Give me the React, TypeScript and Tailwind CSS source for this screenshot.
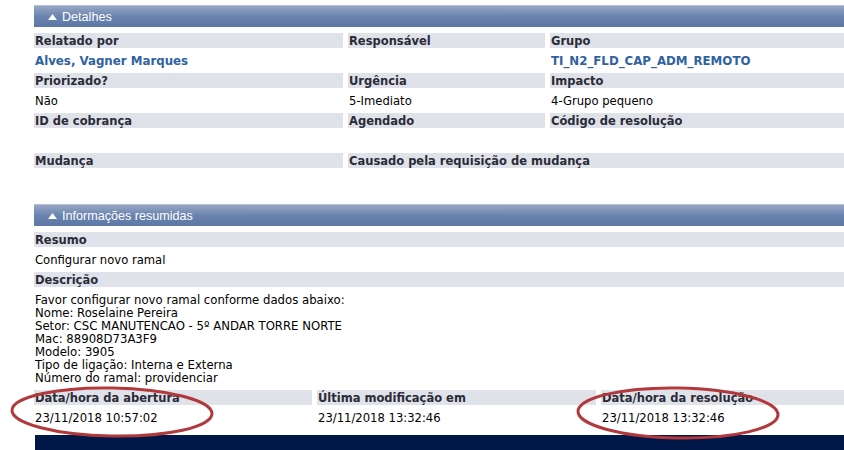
import React from 'react';

const font = { fontFamily: '"DejaVu Sans", Verdana, sans-serif' };

function SectionHeader({ title }: { title: string }) {
  return (
    <div className="h-[22px] flex items-center bg-linear-to-b from-[#98a7c6] via-[#6a83ae] to-[#5c78a5] border-t border-[#b7c1d6] pl-[14px] pt-px text-white text-[12.6px]" style={{ fontFamily: '"Liberation Sans", Arial, sans-serif' }}>
      <svg width="9" height="6" viewBox="0 0 9 6" className="mr-[5px]">
        <path d="M0 6 L4.5 0 L9 6 Z" fill="#fff" />
      </svg>
      {title}
    </div>
  );
}

function Label({ children, className = '' }: { children?: React.ReactNode; className?: string }) {
  return (
    <div className={`h-[15px] leading-[17px] bg-[#dfe2e9] pl-[1px] font-bold text-[11.5px] text-[#2b2b38] whitespace-nowrap overflow-hidden ${className}`}>
      {children}
    </div>
  );
}

function Value({ children, link = false, className = '' }: { children?: React.ReactNode; link?: boolean; className?: string }) {
  return (
    <div className={`h-[25px] leading-[27px] pl-[1px] whitespace-nowrap ${link ? 'text-[#2f62a1] font-bold text-[11.8px]' : 'text-black text-[11.6px]'} ${className}`}>
      {children}
    </div>
  );
}

const descricao = [
  'Favor configurar novo ramal conforme dados abaixo:',
  'Nome: Roselaine Pereira',
  'Setor: CSC MANUTENCAO - 5º ANDAR TORRE NORTE',
  'Mac: 88908D73A3F9',
  'Modelo: 3905',
  'Tipo de ligação: Interna e Externa',
  'Número do ramal: providenciar',
];

export default function App() {
  return (
    <div className="relative w-[844px] h-[450px] overflow-hidden bg-white" style={font}>
      <div className="pl-[34px] pt-[5px]">
        <SectionHeader title="Detalhes" />
        <div className="grid grid-cols-[309px_197px_1fr] gap-x-[5px] mt-[6px]">
          <Label>Relatado por</Label>
          <Label>Responsável</Label>
          <Label>Grupo</Label>
          <Value link>Alves, Vagner Marques</Value>
          <Value />
          <Value link>TI_N2_FLD_CAP_ADM_REMOTO</Value>

          <Label>Priorizado?</Label>
          <Label>Urgência</Label>
          <Label>Impacto</Label>
          <Value>Não</Value>
          <Value>5-Imediato</Value>
          <Value>4-Grupo pequeno</Value>

          <Label>ID de cobrança</Label>
          <Label>Agendado</Label>
          <Label>Código de resolução</Label>
          <Value />
          <Value />
          <Value />

          <Label>Mudança</Label>
          <Label className="col-span-2">Causado pela requisição de mudança</Label>
          <Value />
          <Value className="col-span-2" />
        </div>

        <div className="mt-[11px]">
          <SectionHeader title="Informações resumidas" />
        </div>
        <div className="mt-[6px]">
          <Label>Resumo</Label>
          <Value>Configurar novo ramal</Value>
          <Label>Descrição</Label>
          <div className="pt-[7px] pb-[5px] pl-[1px] text-[11.7px] leading-[13px] text-black">
            {descricao.map((l) => (
              <div key={l}>{l}</div>
            ))}
          </div>
        </div>
        <div className="grid grid-cols-[278px_279px_1fr] gap-x-[5px]">
          <Label>Data/hora da abertura</Label>
          <Label>Última modificação em</Label>
          <Label>Data/hora da resolução</Label>
          <Value>23/11/2018 10:57:02</Value>
          <Value>23/11/2018 13:32:46</Value>
          <Value>23/11/2018 13:32:46</Value>
        </div>
        <div className="mt-[5px] ml-[1px] h-[20px] bg-[#001848]" />
      </div>

      <svg className="absolute left-0 top-0 pointer-events-none" width="844" height="450">
        <ellipse cx="112" cy="412" rx="100" ry="24" fill="none" stroke="#b2393b" strokeWidth="3" transform="rotate(1 112 412)" />
        <ellipse cx="678" cy="413" rx="100" ry="25" fill="none" stroke="#b2393b" strokeWidth="3" transform="rotate(1 678 413)" />
      </svg>
    </div>
  );
}
